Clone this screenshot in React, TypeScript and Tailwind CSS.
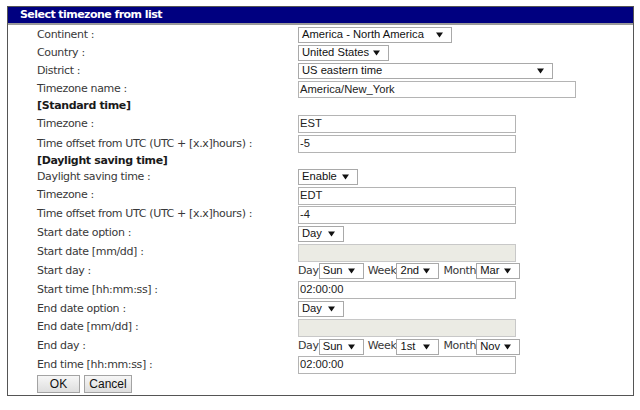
import React from "react";

const labelFont = { fontFamily: '"DejaVu Sans", Verdana, sans-serif' };
const ctrlFont = { fontFamily: '"Liberation Sans", Arial, sans-serif' };

function Arrow() {
  return (
    <svg width="7" height="6" viewBox="0 0 7 6" className="shrink-0">
      <path d="M0 0.5 L7 0.5 L3.5 5.5 Z" fill="#111" />
    </svg>
  );
}

function Sel({ value, w }: { value: string; w: string }) {
  return (
    <div
      className={`${w} shrink-0 h-[16px] border border-[#a9a9a9] bg-white flex items-center justify-between pl-[3px] pr-[8px] text-[11.2px] leading-none text-[#111] whitespace-nowrap`}
      style={ctrlFont}
    >
      <span>{value}</span>
      <Arrow />
    </div>
  );
}

function Inp({ value, w, h = "h-[18px]", disabled }: { value?: string; w: string; h?: string; disabled?: boolean }) {
  return (
    <div
      className={`${w} ${h} shrink-0 border ${disabled ? "bg-[#ebebe4] border-[#c8c8c8]" : "bg-white border-[#b4b4b4]"} flex items-center pl-[1px] text-[11.2px] leading-none text-[#222] whitespace-nowrap`}
      style={ctrlFont}
    >
      {value}
    </div>
  );
}

function Row({ label, h, children, bold }: { label: string; h: string; children?: React.ReactNode; bold?: boolean }) {
  return (
    <div className={`flex items-center ${h}`}>
      <div
        className={`w-[261px] shrink-0 text-[11px] tracking-[-0.35px] whitespace-nowrap ${bold ? "font-bold text-[#1a1a1a]" : "text-[#383838]"}`}
        style={labelFont}
      >
        {label}
      </div>
      <div className="flex items-center">{children}</div>
    </div>
  );
}

function DayRow({ label, day, week, month, h }: { label: string; day: string; week: string; month: string; h: string }) {
  const t = "text-[11px] tracking-[-0.35px] text-[#383838]";
  return (
    <Row label={label} h={h}>
      <span className={t} style={labelFont}>Day</span>
      <Sel value={day} w="w-[45px]" />
      <span className={`${t} ml-[4px]`} style={labelFont}>Week</span>
      <Sel value={week} w="w-[43px]" />
      <span className={`${t} ml-[4px]`} style={labelFont}>Month</span>
      <Sel value={month} w="w-[44px]" />
    </Row>
  );
}

export default function App() {
  return (
    <div className="w-[640px] h-[410px] bg-white pl-[7px] pt-[6px]">
      <div className="w-[627px] h-[390px] border border-[#555] flex flex-col">
        <div className="h-[16px] bg-[#000080] border-b-2 border-[#9a9a9a] box-content flex items-center pl-[12px]">
          <span className="text-white font-bold text-[11px] tracking-[-0.55px] whitespace-nowrap" style={labelFont}>
            Select timezone from list
          </span>
        </div>
        <div className="pl-[29px] pt-[1px] flex flex-col">
          <Row label="Continent :" h="h-[18px]"><Sel value="America - North America" w="w-[154px]" /></Row>
          <Row label="Country :" h="h-[18px]"><Sel value="United States" w="w-[91px]" /></Row>
          <Row label="District :" h="h-[18px]"><Sel value="US eastern time" w="w-[255px]" /></Row>
          <Row label="Timezone name :" h="h-[19px]"><Inp value="America/New_York" w="w-[278px]" h="h-[17px]" /></Row>
          <Row label="[Standard time]" h="h-[15px]" bold />
          <Row label="Timezone :" h="h-[20px]"><Inp value="EST" w="w-[218px]" /></Row>
          <Row label="Time offset from UTC (UTC + [x.x]hours) :" h="h-[20px]"><Inp value="-5" w="w-[218px]" /></Row>
          <Row label="[Daylight saving time]" h="h-[14px]" bold />
          <Row label="Daylight saving time :" h="h-[18px]"><Sel value="Enable" w="w-[60px]" /></Row>
          <Row label="Timezone :" h="h-[19px]"><Inp value="EDT" w="w-[218px]" /></Row>
          <Row label="Time offset from UTC (UTC + [x.x]hours) :" h="h-[19px]"><Inp value="-4" w="w-[218px]" /></Row>
          <Row label="Start date option :" h="h-[19px]"><Sel value="Day" w="w-[46px]" /></Row>
          <Row label="Start date [mm/dd] :" h="h-[19px]"><Inp w="w-[218px]" disabled /></Row>
          <DayRow label="Start day :" day="Sun" week="2nd" month="Mar" h="h-[18px]" />
          <Row label="Start time [hh:mm:ss] :" h="h-[20px]"><Inp value="02:00:00" w="w-[218px]" /></Row>
          <Row label="End date option :" h="h-[18px]"><Sel value="Day" w="w-[46px]" /></Row>
          <Row label="End date [mm/dd] :" h="h-[19px]"><Inp w="w-[218px]" disabled /></Row>
          <DayRow label="End day :" day="Sun" week="1st" month="Nov" h="h-[19px]" />
          <Row label="End time [hh:mm:ss] :" h="h-[18px]"><Inp value="02:00:00" w="w-[218px]" /></Row>
          <div className="flex gap-[4px] mt-[1px]" style={ctrlFont}>
            <button className="w-[43px] h-[18px] border border-[#a3a3a3] bg-gradient-to-b from-[#f6f6f6] to-[#dedede] text-[12px] leading-none text-[#111]">OK</button>
            <button className="w-[48px] h-[18px] border border-[#a3a3a3] bg-gradient-to-b from-[#f6f6f6] to-[#dedede] text-[12px] leading-none text-[#111]">Cancel</button>
          </div>
        </div>
      </div>
    </div>
  );
}
